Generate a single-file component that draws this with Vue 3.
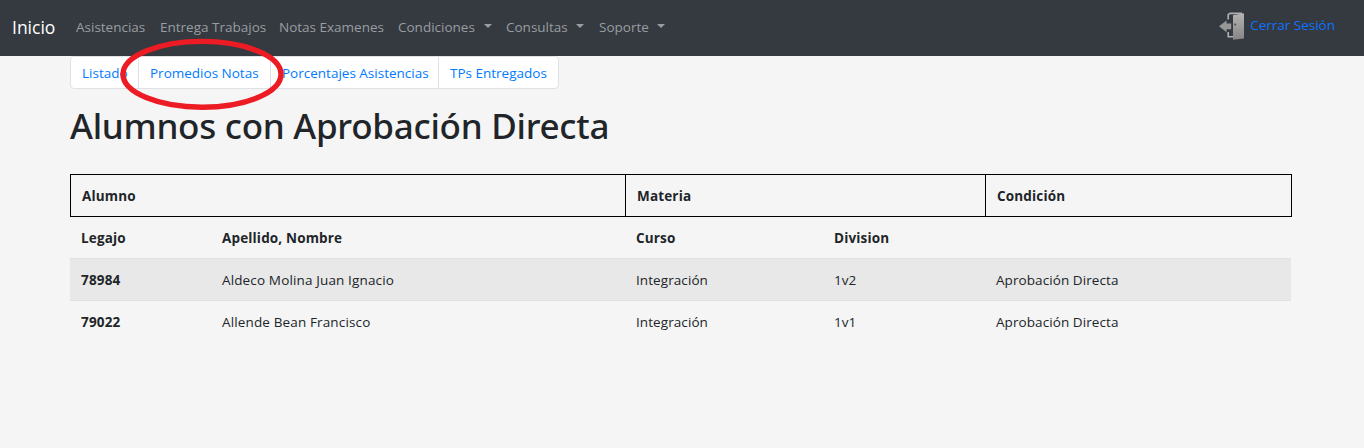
<script setup>
const links = [
  { text: 'Asistencias', cls: 'n1' },
  { text: 'Entrega Trabajos', cls: 'n2' },
  { text: 'Notas Examenes', cls: 'n3' },
  { text: 'Condiciones', cls: 'n4', menu: true },
  { text: 'Consultas', cls: 'n5', menu: true },
  { text: 'Soporte', cls: 'n6', menu: true },
]
const tabs = [
  { text: 'Listado', cls: 't1' },
  { text: 'Promedios Notas', cls: 't2' },
  { text: 'Porcentajes Asistencias', cls: 't3' },
  { text: 'TPs Entregados', cls: 't4' },
]
const rows = [
  { id: '78984', name: 'Aldeco Molina Juan Ignacio', course: 'Integración', division: '1v2', status: 'Aprobación Directa' },
  { id: '79022', name: 'Allende Bean Francisco', course: 'Integración', division: '1v1', status: 'Aprobación Directa' },
]
</script>

<template>
  <div class="page">
    <nav class="navbar">
      <a class="brand"><span>Inicio</span></a>
      <a v-for="l in links" :key="l.text" class="link" :class="l.cls">
        <span>{{ l.text }}</span><i v-if="l.menu" class="caret"></i>
      </a>
      <a class="logout">
        <svg class="door" width="28" height="30" viewBox="0 0 28 30">
          <defs>
            <linearGradient id="metal" x1="0" y1="0" x2="0" y2="1">
              <stop offset="0" stop-color="#b4b4b4" />
              <stop offset="1" stop-color="#858585" />
            </linearGradient>
          </defs>
          <path d="M10.2 8.5V3.6L12 2.4H24M10.2 21V25.8H15" fill="none" stroke="#b0b0b0" stroke-width="1.6" />
          <path d="M15 4.2L26 2.2V27.4L15 28.8Z" fill="url(#metal)" />
          <path d="M1 15.2L8.6 9.6V12.6H13.2V18.2H8.6V21.2Z" fill="#989898" />
          <circle cx="17.2" cy="13.6" r="1" fill="#4a4a4a" />
        </svg>
        <span>Cerrar Sesión</span>
      </a>
    </nav>

    <main class="container">
      <div class="tabs">
        <a v-for="t in tabs" :key="t.text" class="tab" :class="t.cls"><span>{{ t.text }}</span></a>
      </div>
      <h1><span>Alumnos con Aprobación Directa</span></h1>
      <table>
        <thead>
          <tr class="groups"><th>Alumno</th><th>Materia</th><th>Condición</th></tr>
          <tr class="row"><th>Legajo</th><th>Apellido, Nombre</th><th>Curso</th><th>Division</th><th></th></tr>
        </thead>
        <tbody>
          <tr v-for="r in rows" :key="r.id" class="row">
            <th>{{ r.id }}</th><td>{{ r.name }}</td><td>{{ r.course }}</td><td>{{ r.division }}</td><td>{{ r.status }}</td>
          </tr>
        </tbody>
      </table>
    </main>

    <svg class="marker" width="168" height="76" viewBox="0 0 168 76">
      <ellipse cx="84" cy="38.3" rx="79" ry="32.9" fill="none" stroke="#ed1c24" stroke-width="5.4" />
    </svg>
  </div>
</template>

<style>
body { margin: 0; background: #f5f5f5; }
</style>

<style scoped>
.page {
  position: relative;
  height: 448px;
  overflow: hidden;
  background: #f5f5f5;
  color: #212529;
  font: 13.5px/21px "Segoe UI", "Open Sans", "Noto Sans", sans-serif;
}
a, th, td { white-space: nowrap; }
.navbar {
  display: flex;
  align-items: center;
  box-sizing: border-box;
  height: 56px;
  padding: 0 0 2px 12px;
  background: #343a40;
}
.brand { width: 64px; color: #fff; font-size: 17.5px; }
.link { display: flex; align-items: center; color: #9a9da0; }
.n1 { width: 84px; }
.n2 { width: 119px; }
.n3 { width: 119px; }
.n4 { width: 108px; }
.n4 span { width: 78px; }
.n5 { width: 93px; }
.n5 span { width: 62px; }
.n6 { width: 80px; }
.n6 span { width: 50px; }
.caret {
  margin: -2px 0 0 8px;
  border: 4px solid transparent;
  border-top-color: currentColor;
  border-bottom: 0;
}
.logout { display: flex; align-items: center; margin: 0 29px 3px auto; color: #0d72ff; }
.door { margin-right: 4px; }
.container { margin-left: 70px; width: 1222px; }
.tabs {
  display: flex;
  box-sizing: border-box;
  width: 489px;
  height: 33px;
  border: 1px solid #dee2e6;
  border-radius: 4px;
  background: #fff;
}
.tab { box-sizing: border-box; padding: 6px 0 0 11px; line-height: 20px; color: #007bff; }
.tab + .tab { border-left: 1px solid #dee2e6; }
.t1 { width: 67px; }
.t2 { width: 132px; }
.t3 { width: 168px; }
.t4 { width: 120px; }
h1 {
  margin: 16px 0 27px;
  font-family: "Segoe UI", "Noto Sans", sans-serif;
  font-size: 35px;
  font-weight: 500;
  line-height: 42px;
  letter-spacing: -0.27px;
  white-space: nowrap;
}
table, thead, tbody { display: block; }
th, td { padding: 0; text-align: left; }
th { letter-spacing: 0.16px; }
td { letter-spacing: 0.08px; }
td:nth-child(2) { letter-spacing: 0.14px; }
.groups {
  display: grid;
  grid-template-columns: 554px 360px 1fr;
  box-sizing: border-box;
  height: 43px;
  border: 1px solid #000;
}
.groups th { padding: 11px 0 0 11px; }
.groups th + th { border-left: 1px solid #000; }
.row {
  display: grid;
  grid-template-columns: 141px 414px 198px 162px 1fr;
  box-sizing: border-box;
  width: 1221px;
  height: 42px;
}
.row > * { padding: 11px 0 0 11px; }
thead .row { height: 41px; }
tbody .row { border-top: 1px solid #dee0e1; }
tbody .row:nth-child(odd) { background: #e8e8e8; }
.marker { position: absolute; left: 118px; top: 36px; }
</style>
